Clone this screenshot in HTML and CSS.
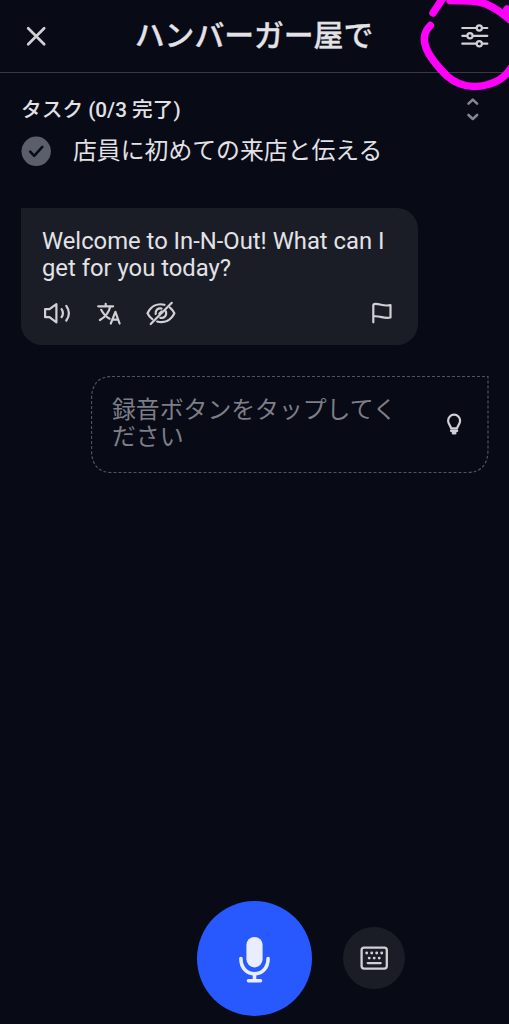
FILE: index.html
```
<!DOCTYPE html>
<html lang="ja">
<head>
<meta charset="utf-8">
<title>ハンバーガー屋で</title>
<link rel="stylesheet" href="styles.css">
</head>
<body>
<div class="screen">
  <header class="header">
    <svg class="icon" width="24" height="24" viewBox="24 24 24 24" stroke-width="2.7"><path d="M28.2 28.2 44.200 44.200M44.200 28.200 28.200 44.200"/></svg>
    <h1 class="title">ハンバーガー屋で</h1>
    <svg class="icon" width="30" height="24" viewBox="460 24 30 24" stroke-width="2.2"><path d="M462.300 28h14.200M482.100 28h5.200M462.300 35.800h4.900M472.800 35.800h14.500M462.300 43.700h14.200M482.100 43.700h5.200"/><circle cx="479.300" cy="28" r="2.600"/><circle cx="470" cy="35.800" r="2.600"/><circle cx="479.300" cy="43.700" r="2.600"/></svg>
  </header>

  <section class="tasks">
    <div class="tasks-head">
      <h2 class="tasks-title">タスク (0/3 完了)</h2>
      <svg class="icon icon-muted" width="14" height="26" viewBox="466 96 14 26" stroke-width="2.600"><path d="m468.500 103.600 4.300-4 4.300 4M468.500 115l4.300 4 4.300-4"/></svg>
    </div>
    <div class="task">
      <svg width="30" height="30" viewBox="21 136 30 30"><circle class="check-disc" cx="36.200" cy="151.300" r="14.700"/><path class="check-mark" d="m30.200 151.700 4 4.100 8.100-8.900"/></svg>
      <span>店員に初めての来店と伝える</span>
    </div>
  </section>

  <main class="chat">
    <article class="bubble">
      <p class="message">Welcome to In-N-Out! What can I get for you today?</p>
      <div class="actions">
        <svg class="icon" width="30" height="26" viewBox="42 300 30 26" stroke-width="2.200"><path d="M45.100 309.200h4.400l6.900-5.100v18.300l-6.900-5.200h-4.400zM61.600 309.200q2.600 4 0 8M66.300 305.900q5.200 7.300 0 14.600"/></svg>
        <svg class="icon" width="26" height="26" viewBox="96 300 26 26" stroke-width="2.200"><path d="M98.200 306.300h14.900M105.700 303.800v2.300M101.200 309.800q3.200 6.200 8.400 8.900M110.300 306.500q-2.200 9.100-10.400 13.500M110.800 323.500l4.600-11.700 4.200 11.700M112.500 319.700h5.800"/></svg>
        <svg class="icon" width="32" height="26" viewBox="146 300 32 26" stroke-width="2.200"><path d="M164.500 304.800c-7.600-2-13.800 1.900-17 8.500 1.100 2.300 2.700 4.400 4.800 5.900M170 307.600c1.800 1.400 3.300 3.400 4.400 5.700-3.200 6.800-9.500 10.100-17.300 8.200M161.500 308.600c-3.800-.8-6.400 1.700-5.800 5.400M165.900 311.500c1.200 4-1.800 7-5.600 6.300M159.300 313.700l2.200-2.200M150.700 324l21.100-21.200"/></svg>
        <svg class="icon flag" width="24" height="26" viewBox="370 300 24 26" stroke-width="2.200"><path d="M373.300 322.300v-16.800q0-1.600 2-1.600c6.200 0 7.200 2.600 15.200 1.300v12.300c-7.500 1.500-9.100-1.900-17.200-1.200"/></svg>
      </div>
    </article>

    <div class="reply">
      <svg class="reply-outline" width="399" height="98" viewBox="0 0 399 98"><path d="M21 .5h376v73q0 23-21 23H21Q.5 96.500 .5 73.500V24Q.5.5 21 .5z"/></svg>
      <p class="placeholder">録音ボタンをタップしてください</p>
      <svg class="icon" width="18" height="26" viewBox="445 411 18 26" stroke-width="2.200"><path d="M451.100 428.300c-.2-2.400-3-4.200-3-7.600a6 6 0 0 1 12 0c0 3.400-2.800 5.200-3 7.600z"/><path d="M451.200 430.700h5.800M452.900 433.100h2.400" stroke-width="2.600"/></svg>
    </div>
  </main>

  <footer class="controls">
    <button class="mic" aria-label="録音">
      <svg width="34" height="50" viewBox="238 933 34 50"><rect class="mic-fill" x="246.400" y="936" width="16.200" height="30.400" rx="8.100"/><path class="mic-line" d="M240.900 957.500c0 20.500 27.200 20.500 27.200 0M254.500 973v6.500M248.500 979.700h12"/></svg>
    </button>
    <button class="keyboard" aria-label="キーボード">
      <svg class="icon" width="30" height="26" viewBox="358.500 945.500 30 26" stroke-width="2.300"><rect x="361.100" y="948.100" width="25.200" height="21" rx="2.500"/><path stroke-width="2.900" d="M366.200 953.500h.01M371.200 953.500h.01M376.200 953.500h.01M381.200 953.500h.01M368.700 958.600h.01M373.700 958.600h.01M378.700 958.600h.01"/><path d="M367.200 963.600h13"/></svg>
    </button>
  </footer>

  <svg class="marker" width="99" height="96" viewBox="410 0 99 96"><path d="m443-2-10 15M430.300 25.500C423 33 423.500 40 426 48c4 10 13 20 21 28 8 7 17 10.500 27 10.500 9 0 17-2 25-6.500 5-3 9-7 12-12M450 .5c17 .5 30-1 43 7 7 4 12 8 18 13M507 9l4 3"/></svg>
</div>
</body>
</html>
```
FILE: styles.css
```
* { box-sizing: border-box; }
body {
  margin: 0;
  background: #080a16;
  color: #e2e2e7;
  font-family: Roboto, "Noto Sans CJK JP", sans-serif;
}
h1, h2, p { margin: 0; }
svg { display: block; flex: none; }
button { border: 0; padding: 0; }
.screen {
  position: relative;
  width: 509px;
  height: 1024px;
  overflow: hidden;
  display: flex;
  flex-direction: column;
}
.icon {
  fill: none;
  stroke: #d0d0d5;
  stroke-linecap: round;
  stroke-linejoin: round;
}
.icon-muted { stroke: #85868f; }
.header {
  height: 73px;
  padding: 0 19px 1px 24px;
  border-bottom: 1px solid #383a43;
  display: flex;
  align-items: center;
  justify-content: space-between;
}
.title {
  font-size: 29.8px;
  line-height: 40px;
  font-weight: 500;
  white-space: nowrap;
  -webkit-text-stroke: 0.3px;
}
.tasks { padding: 23px 29px 0 21px; }
.tasks-head {
  height: 26px;
  display: flex;
  align-items: center;
  justify-content: space-between;
}
.tasks-title {
  padding-top: 2px;
  font-size: 20.7px;
  line-height: 26px;
  font-weight: 500;
}
.task {
  height: 30px;
  margin-top: 14px;
  display: flex;
  align-items: center;
  gap: 22px;
  font-size: 23.85px;
  line-height: 30px;
}
.check-disc { fill: #5b5f6b; }
.check-mark {
  fill: none;
  stroke: #0a0c18;
  stroke-width: 2.6;
  stroke-linecap: round;
  stroke-linejoin: round;
}
.chat {
  padding: 42px 20px 0 21px;
  display: flex;
  flex-direction: column;
}
.bubble {
  width: 397px;
  height: 137px;
  padding: 20px 24px 0 21px;
  background: #1b1d26;
  border-radius: 0 21px 21px 21px;
}
.message {
  font-size: 23.8px;
  line-height: 27px;
  white-space: pre-line;
}
.actions { display: flex; margin-top: 18px; gap: 24px; }
.flag { margin-left: auto; }
.reply {
  position: relative;
  align-self: flex-end;
  width: 398px;
  height: 98px;
  margin-top: 31px;
  padding: 21px 26px 0 21px;
  display: flex;
  justify-content: space-between;
}
.reply .icon { margin-top: 14px; }
.reply-outline {
  position: absolute;
  left: 0;
  top: 0;
  fill: none;
  stroke: #51535d;
  stroke-width: 1.2;
  stroke-dasharray: 3 2;
}
.placeholder {
  width: 290px;
  color: #7d7e87;
  font-size: 23.85px;
  line-height: 27px;
}
.controls {
  margin-top: auto;
  height: 123px;
  padding-left: 197px;
  display: flex;
  align-items: flex-start;
  gap: 31px;
}
.mic, .keyboard {
  border-radius: 50%;
  display: flex;
  align-items: center;
  justify-content: center;
}
.mic { width: 115px; height: 115px; background: #2859ff; }
.mic-fill { fill: #e9edff; }
.mic-line {
  fill: none;
  stroke: #e9edff;
  stroke-width: 3.6;
  stroke-linecap: round;
}
.keyboard {
  width: 62px;
  height: 62px;
  margin-top: 26px;
  background: #1b1d26;
}
.marker {
  position: absolute;
  right: 0;
  top: 0;
  fill: none;
  stroke: #ff00fa;
  stroke-width: 7.5;
  stroke-linecap: round;
  stroke-linejoin: round;
}
```
